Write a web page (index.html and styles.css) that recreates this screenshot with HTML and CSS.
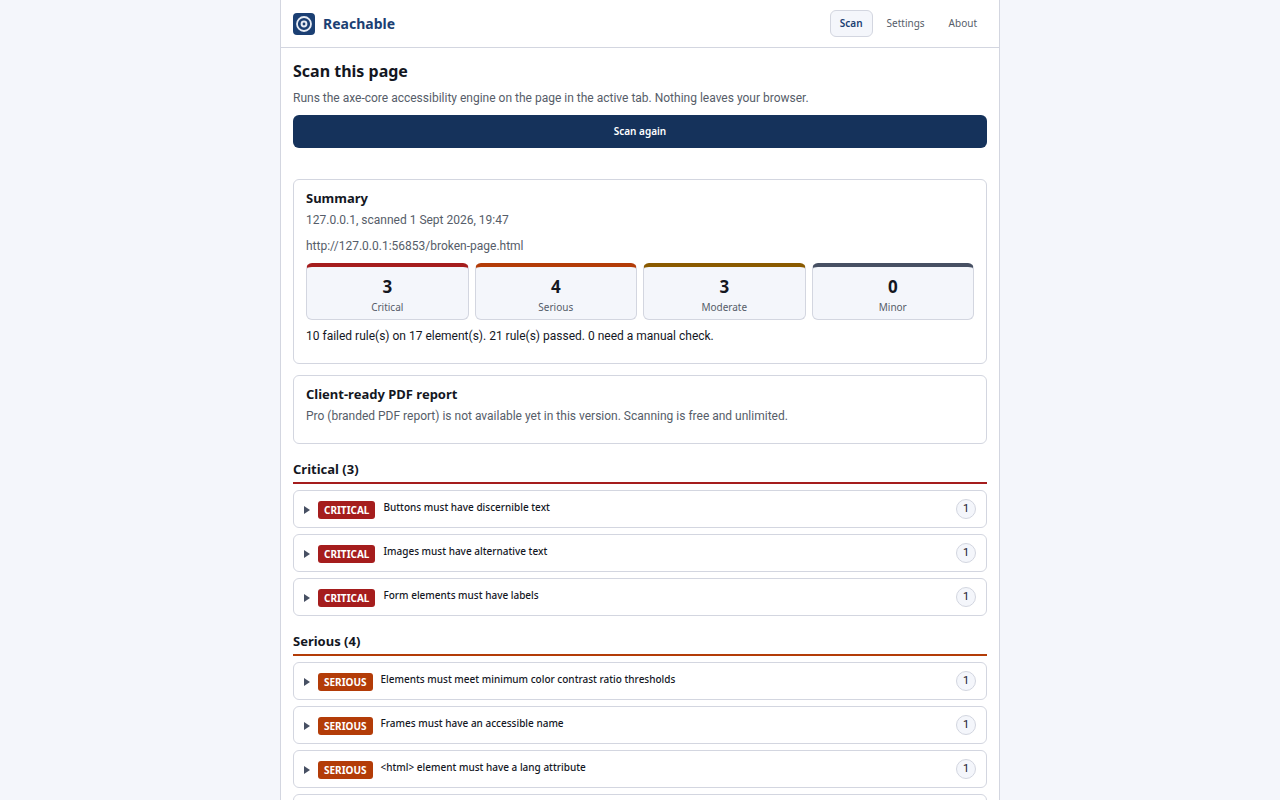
FILE: index.html
```html
<!DOCTYPE html>
<html lang="en">
<head>
  <meta charset="utf-8">
  <meta name="viewport" content="width=device-width, initial-scale=1">
  <title>Reachable</title>
  <link rel="stylesheet" href="styles.css">
</head>
<body>
  <div class="app">
    <header class="header">
      <div class="brand">
        <svg class="logo" viewBox="0 0 22 22" aria-hidden="true">
          <rect width="22" height="22" rx="4" fill="#1b3f73"/>
          <circle cx="11" cy="11" r="7" fill="none" stroke="#e8ecf3" stroke-width="1.8"/>
          <circle cx="11" cy="11" r="2.4" fill="#1b3f73" stroke="#e8ecf3" stroke-width="2"/>
        </svg>
        <span class="brand-name">Reachable</span>
      </div>
      <nav class="nav">
        <button type="button" class="tab active" aria-current="page">Scan</button>
        <button type="button" class="tab">Settings</button>
        <button type="button" class="tab">About</button>
      </nav>
    </header>

    <main class="main">
      <h1>Scan this page</h1>
      <p class="muted">Runs the axe-core accessibility engine on the page in the active tab. Nothing leaves your browser.</p>
      <button type="button" class="primary">Scan again</button>
      <div class="status" role="status"></div>

      <section class="card">
        <h2>Summary</h2>
        <p class="muted">127.0.0.1, scanned 1 Sept 2026, 19:47</p>
        <p class="muted">http://127.0.0.1:56853/broken-page.html</p>
        <div class="stats">
          <div class="stat critical"><span class="num">3</span><span class="label">Critical</span></div>
          <div class="stat serious"><span class="num">4</span><span class="label">Serious</span></div>
          <div class="stat moderate"><span class="num">3</span><span class="label">Moderate</span></div>
          <div class="stat minor"><span class="num">0</span><span class="label">Minor</span></div>
        </div>
        <p>10 failed rule(s) on 17 element(s). 21 rule(s) passed. 0 need a manual check.</p>
      </section>

      <section class="card">
        <h2>Client-ready PDF report</h2>
        <p class="muted">Pro (branded PDF report) is not available yet in this version. Scanning is free and unlimited.</p>
      </section>

      <section class="group critical">
        <h2>Critical (3)</h2>
        <details class="rule">
          <summary><span class="badge">Critical</span><span class="title">Buttons must have discernible text</span><span class="count">1</span></summary>
        </details>
        <details class="rule">
          <summary><span class="badge">Critical</span><span class="title">Images must have alternative text</span><span class="count">1</span></summary>
        </details>
        <details class="rule">
          <summary><span class="badge">Critical</span><span class="title">Form elements must have labels</span><span class="count">1</span></summary>
        </details>
      </section>

      <section class="group serious">
        <h2>Serious (4)</h2>
        <details class="rule">
          <summary><span class="badge">Serious</span><span class="title">Elements must meet minimum color contrast ratio thresholds</span><span class="count">1</span></summary>
        </details>
        <details class="rule">
          <summary><span class="badge">Serious</span><span class="title">Frames must have an accessible name</span><span class="count">1</span></summary>
        </details>
        <details class="rule">
          <summary><span class="badge">Serious</span><span class="title">&lt;html&gt; element must have a lang attribute</span><span class="count">1</span></summary>
        </details>
        <details class="rule">
          <summary></summary>
        </details>
      </section>
    </main>
  </div>
</body>
</html>
```
FILE: styles.css
```css
:root {
  --bg: #f4f6fb;
  --ink: #14171f;
  --muted: #565d69;
  --line: #d3d6e0;
  --navy: #15325b;
}

* {
  box-sizing: border-box;
}

html {
  scrollbar-width: none;
}

body {
  margin: 0;
  background: var(--bg);
  color: var(--ink);
  font: 12px/19px "Segoe UI", Roboto, "Noto Sans", sans-serif;
}

button {
  font: inherit;
  cursor: pointer;
}

.app {
  max-width: 720px;
  min-height: 100vh;
  margin: 0 auto;
  background: #fff;
  border: solid var(--line);
  border-width: 0 1px;
}

.header {
  display: flex;
  align-items: center;
  justify-content: space-between;
  padding: 10px 12px;
  border-bottom: 1px solid var(--line);
}

.brand {
  display: flex;
  align-items: center;
  gap: 8px;
}

.logo {
  width: 22px;
  height: 22px;
}

.brand-name {
  color: #1b3f73;
  font-size: 14px;
  font-weight: 700;
}

.nav {
  display: flex;
  gap: 4px;
}

.tab {
  padding: 4px 9px;
  border: 1px solid transparent;
  border-radius: 6px;
  background: none;
  color: var(--muted);
  font-size: 10px;
  line-height: 17px;
}

.tab.active {
  background: var(--bg);
  border-color: var(--line);
  color: #1b3f73;
  font-weight: 600;
}

.main {
  padding: 12px;
}

.brand-name,
h1,
h2,
.tab,
.primary,
.num,
.label,
.badge,
.title {
  font-family: "Segoe UI", "Noto Sans", sans-serif;
}

h1 {
  margin: 0 0 7px;
  font-size: 16px;
  line-height: 22px;
}

h2 {
  margin: 0 0 4px;
  font-size: 13px;
  line-height: 17px;
}

p {
  margin: 0 0 7px;
}

.muted {
  color: var(--muted);
}

.primary {
  display: block;
  width: 100%;
  padding: 7px 12px;
  border: 0;
  border-radius: 6px;
  background: var(--navy);
  color: #fff;
  font-size: 10px;
  font-weight: 600;
}

.status {
  min-height: 19px;
  margin: 6px 0;
}

.card {
  margin-bottom: 11px;
  padding: 10px 12px;
  border: 1px solid var(--line);
  border-radius: 6px;
}

.critical { --level: #a51d1d; }
.serious  { --level: #b33c08; }
.moderate { --level: #8a5a00; }
.minor    { --level: #475063; }

.stats {
  display: grid;
  grid-template-columns: repeat(4, 1fr);
  gap: 6px;
  margin-bottom: 7px;
}

.stat {
  display: flex;
  flex-direction: column;
  padding: 8px 6px 4px;
  border: 1px solid var(--line);
  border-top: 4px solid var(--level);
  border-radius: 6px;
  background: var(--bg);
  text-align: center;
}

.num {
  font-size: 17px;
  font-weight: 700;
  line-height: 24px;
}

.label {
  color: var(--muted);
  font-size: 10px;
  line-height: 16px;
}

.group {
  margin-top: 16px;
}

.group h2 {
  margin-bottom: 6px;
  padding-bottom: 4px;
  border-bottom: 2px solid var(--level);
  line-height: 18px;
}

.rule {
  margin-bottom: 6px;
  border: 1px solid var(--line);
  border-radius: 6px;
}

.rule summary {
  display: flex;
  align-items: flex-start;
  gap: 8px;
  min-height: 36px;
  padding: 8px 10px;
  list-style: none;
  cursor: pointer;
}

.rule summary::before {
  content: "";
  margin-top: 7px;
  border: solid transparent;
  border-width: 4px 0 4px 6px;
  border-left-color: #475063;
}

.badge {
  margin-top: 2px;
  padding: 0 6px;
  border-radius: 3px;
  background: var(--level);
  color: #fff;
  font-size: 10px;
  font-weight: 700;
  line-height: 18px;
  text-transform: uppercase;
}

.title {
  flex: 1;
  font-size: 10px;
  font-weight: 500;
  line-height: 16px;
}

.count {
  min-width: 20px;
  border: 1px solid var(--line);
  border-radius: 10px;
  background: var(--bg);
  font-size: 11px;
  line-height: 18px;
  text-align: center;
}
```
